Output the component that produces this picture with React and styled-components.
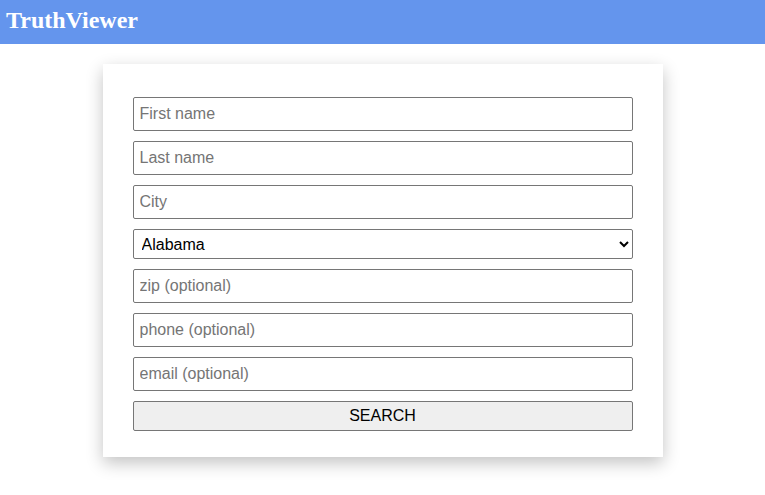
import React from "react";
import styled, { createGlobalStyle } from "styled-components";

const GlobalStyle = createGlobalStyle`
  body {
    margin: 0;
    background: #fff;
    font-family: "Liberation Sans", Arial, sans-serif;
  }
`;

const Header = styled.header`
  height: 44px;
  background: #6495ed;
  display: flex;
  align-items: center;
  padding: 0 6px;
  box-sizing: border-box;
`;

const Title = styled.h1`
  margin: 0;
  color: #fff;
  font-family: "Liberation Serif", "Times New Roman", serif;
  font-weight: bold;
  font-size: 24px;
  line-height: 1;
  padding-bottom: 4px;
`;

const Main = styled.main`
  display: flex;
  justify-content: center;
  padding: 20px 0 40px;
`;

const Card = styled.form`
  width: 560px;
  box-sizing: border-box;
  padding: 33px 30px 26px;
  background: #fff;
  box-shadow: 0 6px 16px rgba(0, 0, 0, 0.24);
  display: flex;
  flex-direction: column;
  gap: 10px;
`;

const Field = styled.input`
  height: 34px;
  box-sizing: border-box;
  border: 1px solid #767676;
  border-radius: 2px;
  padding: 0 6px;
  font-family: "Liberation Sans", Arial, sans-serif;
  font-size: 16px;
  color: #000;

  &::placeholder {
    color: #757575;
  }
`;

const Select = styled.select`
  height: 30px;
  box-sizing: border-box;
  border: 1px solid #767676;
  border-radius: 2px;
  padding: 0 4px;
  font-family: "Liberation Sans", Arial, sans-serif;
  font-size: 16px;
  color: #000;
  background: #fff;
`;

const SearchButton = styled.button`
  height: 30px;
  box-sizing: border-box;
  border: 1px solid #767676;
  border-radius: 2px;
  background: #efefef;
  font-family: "Liberation Sans", Arial, sans-serif;
  font-size: 16px;
  color: #000;
`;

const states = ["Alabama", "Alaska", "Arizona", "Arkansas", "California"];

export default function App() {
  return (
    <>
      <GlobalStyle />
      <Header>
        <Title>TruthViewer</Title>
      </Header>
      <Main>
        <Card onSubmit={(e) => e.preventDefault()}>
          <Field placeholder="First name" />
          <Field placeholder="Last name" />
          <Field placeholder="City" />
          <Select defaultValue="Alabama">
            {states.map((s) => (
              <option key={s}>{s}</option>
            ))}
          </Select>
          <Field placeholder="zip (optional)" />
          <Field placeholder="phone (optional)" />
          <Field placeholder="email (optional)" />
          <SearchButton type="submit">SEARCH</SearchButton>
        </Card>
      </Main>
    </>
  );
}
